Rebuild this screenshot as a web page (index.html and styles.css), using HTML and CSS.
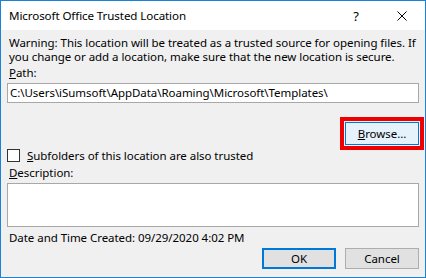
FILE: index.html
```html
<!DOCTYPE html>
<html>
<head>
<meta charset="utf-8">
<link rel="stylesheet" href="styles.css">
</head>
<body>
<div class="dialog">
  <div class="titlebar">
    <span class="title">Microsoft Office Trusted Location</span>
    <div class="tbtns">
      <span class="tbtn help">?</span>
      <span class="tbtn close"><svg width="10" height="10" viewBox="0 0 10 10"><path d="M0.5 0.5L9.5 9.5M9.5 0.5L0.5 9.5" stroke="#000" stroke-width="1" fill="none"/></svg></span>
    </div>
  </div>
  <div class="content">
    <p class="warn">Warning: This location will be treated as a trusted source for opening files. If<br>you change or add a location, make sure that the new location is secure.</p>
    <div class="label lbl-path"><u>P</u>ath:</div>
    <div class="input">C:\Users\iSumsoft\AppData\Roaming\Microsoft\Templates\</div>
    <div class="browse-row"><span class="btn browse"><u>B</u>rowse...</span></div>
    <div class="check-row"><span class="checkbox"></span><span class="check-label"><u>S</u>ubfolders of this location are also trusted</span></div>
    <div class="label lbl-desc"><u>D</u>escription:</div>
    <div class="textarea"></div>
    <div class="date-row"><span class="date-label">Date and Time Created:</span><span class="date-val">09/29/2020 4:02 PM</span></div>
    <div class="btn-row"><span class="btn ok">OK</span><span class="btn cancel">Cancel</span></div>
  </div>
</div>
</body>
</html>
```
FILE: styles.css
```css
* { box-sizing: border-box; }
html, body { margin: 0; padding: 0; }
body { font-family: "Noto Sans", "Open Sans", sans-serif; font-size: 11.5px; letter-spacing: -0.05px; color: #000; }
.dialog { width: 426px; height: 278px; border: 1px solid #1883d7; background: #f0f0f0; display: flex; flex-direction: column; overflow: hidden; }
.titlebar { height: 29px; flex: none; background: #fff; display: flex; align-items: center; justify-content: space-between; padding-left: 8px; }
.title { font-size: 11.6px; letter-spacing: -0.1px; line-height: 16px; margin-top: 1px; white-space: nowrap; }
.tbtns { display: flex; height: 29px; }
.tbtn { width: 46px; height: 29px; display: flex; align-items: center; justify-content: center; }
.help { font-size: 13px; }
.content { padding: 6px 6px 0 6px; display: flex; flex-direction: column; }
.warn { margin: 0; padding-left: 2px; line-height: 14px; white-space: nowrap; }
.label { padding-left: 2px; line-height: 14px; white-space: nowrap; }
.lbl-path { margin-top: 2px; }
.input { margin-top: 3px; height: 20px; background: #fff; border: 1px solid #a8a8a8; padding: 0 2px; line-height: 18px; white-space: nowrap; overflow: hidden; }
.browse-row { display: flex; justify-content: flex-end; margin-top: 19px; }
.btn { display: flex; align-items: center; justify-content: center; width: 74px; background: #e1e1e1; border: 1px solid #adadad; white-space: nowrap; }
.browse { height: 23px; background: #e5f1fb; border-color: #0078d7; outline: 4px solid #ee0000; outline-offset: 1px; }
.check-row { display: flex; align-items: center; margin-top: 4px; height: 13px; white-space: nowrap; }
.checkbox { width: 13px; height: 13px; flex: none; border: 1px solid #333; background: #fff; margin-right: 7px; }
.check-label { line-height: 13px; }
.lbl-desc { margin-top: 4px; }
.textarea { margin-top: 3px; height: 44px; flex: none; background: #fff; border: 1px solid #a8a8a8; }
.date-row { margin-top: 4px; padding-left: 2px; line-height: 13px; display: flex; white-space: nowrap; }
.date-label { width: 129px; flex: none; }
.btn-row { display: flex; justify-content: flex-end; gap: 9px; margin-top: 4px; }
.ok, .cancel { height: 21px; }
.ok { border: 2px solid #0078d7; }
```
